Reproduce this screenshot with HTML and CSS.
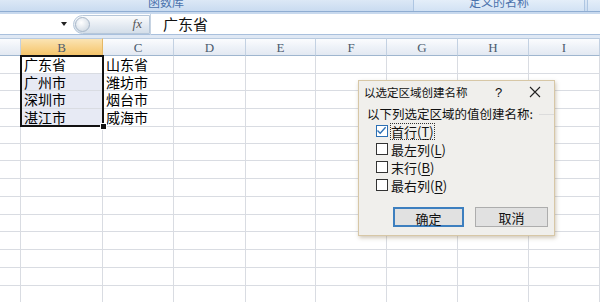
FILE: index.html
```html
<!DOCTYPE html>
<html>
<head lang="zh">
    <meta charset="UTF-8">
    <title>以选定区域创建名称</title>
    <link rel="stylesheet" href="styles.css">
</head>
<body>
<div class="ribbon">
    <div class="group first"><span>函数库</span></div>
    <div class="group names"><span>定义的名称</span></div>
    <div class="group last"></div>
</div>
<div class="formulaBar">
    <div class="nameBox"><span class="arrow"></span></div>
    <div class="pill"><span class="knob"></span><span class="fx">fx</span></div>
    <div class="formula">广东省</div>
</div>
<div class="band"></div>
<div class="sheetWrap">
    <div class="sheet" id="sheet">
        <div class="head"></div>
        <div class="head active">B</div>
        <div class="head">C</div>
        <div class="head">D</div>
        <div class="head">E</div>
        <div class="head">F</div>
        <div class="head">G</div>
        <div class="head">H</div>
        <div class="head">I</div>

        <div class="cell"></div><div class="cell">广东省</div><div class="cell">山东省</div>
        <div class="cell"></div><div class="cell"></div><div class="cell"></div><div class="cell"></div><div class="cell"></div><div class="cell"></div>

        <div class="cell"></div><div class="cell sel">广州市</div><div class="cell">潍坊市</div>
        <div class="cell"></div><div class="cell"></div><div class="cell"></div><div class="cell"></div><div class="cell"></div><div class="cell"></div>

        <div class="cell"></div><div class="cell sel">深圳市</div><div class="cell">烟台市</div>
        <div class="cell"></div><div class="cell"></div><div class="cell"></div><div class="cell"></div><div class="cell"></div><div class="cell"></div>

        <div class="cell"></div><div class="cell sel">湛江市</div><div class="cell">威海市</div>
        <div class="cell"></div><div class="cell"></div><div class="cell"></div><div class="cell"></div><div class="cell"></div><div class="cell"></div>
    </div>
    <div class="selection"><span class="handle"></span></div>

    <div class="dialog">
        <div class="titleBar">
            <span class="title">以选定区域创建名称</span>
            <span class="help">?</span>
            <svg class="close" width="12" height="12" viewBox="0 0 12 12"><path d="M1 1 L11 11 M11 1 L1 11" stroke="#222" stroke-width="1.1"/></svg>
        </div>
        <div class="legend">
            <span>以下列选定区域的值创建名称:</span>
            <span class="rule"></span>
        </div>
        <ul class="checks">
            <li><span class="box checked"><svg width="11" height="11" viewBox="0 0 11 11"><path d="M1.5 5.5 L4.2 8.3 L9.6 2.2" fill="none" stroke="#2b6fb4" stroke-width="1.3"/></svg></span><span class="focus">首行(<u>T</u>)</span></li>
            <li><span class="box"></span><span>最左列(<u>L</u>)</span></li>
            <li><span class="box"></span><span>末行(<u>B</u>)</span></li>
            <li><span class="box"></span><span>最右列(<u>R</u>)</span></li>
        </ul>
        <div class="buttons">
            <button class="btn primary">确定</button>
            <button class="btn">取消</button>
        </div>
    </div>
</div>
<script>
    // 补齐下面的空行
    var sheet = document.getElementById("sheet");
    for(var i = 0; i < 10 * 9; i++){
        var c = document.createElement("div");
        c.className = "cell";
        sheet.appendChild(c);
    }
</script>
</body>
</html>
```

FILE: styles.css
```css
*{
    padding: 0;
    margin: 0;
    box-sizing: border-box;
}
body{
    width: 600px;
    height: 303px;
    overflow: hidden;
    background: #fff;
    font-family: "Noto Sans CJK SC", "Liberation Sans", sans-serif;
}
ul{
    list-style: none;
}
.ribbon{
    display: flex;
    height: 11px;
    overflow: hidden;
    background: linear-gradient(#dce8f6, #c9dbf0);
}
.group{
    height: 11px;
    font-size: 12px;
    line-height: 12px;
    color: #4a72ac;
}
.group span{
    display: block;
    margin-top: -4px;
}
.group.first{
    width: 413px;
    padding-left: 148px;
}
.group.names{
    width: 172px;
    text-align: center;
    background: linear-gradient(#e4eef9, #d2e2f4);
    border-left: 1px solid #aec6e2;
    border-right: 1px solid #aec6e2;
}
.group.last{
    flex: 1;
    margin-left: 2px;
    border-left: 1px solid #aec6e2;
    background: linear-gradient(#e4eef9, #d2e2f4);
}
.formulaBar{
    display: flex;
    align-items: center;
    height: 24px;
    border-top: 1px solid #8fadd2;
    border-bottom: 1px solid #a9c0dd;
    box-shadow: inset 0 2px 0 #c8d9ee;
}
.nameBox{
    width: 73px;
    height: 100%;
    position: relative;
}
.arrow{
    position: absolute;
    left: 61px;
    top: 10px;
    border-left: 3px solid transparent;
    border-right: 3px solid transparent;
    border-top: 4px solid #222;
}
.pill{
    display: flex;
    align-items: center;
    justify-content: flex-end;
    width: 77px;
    height: 19px;
    margin-top: 2px;
    padding-right: 4px;
    border: 1px solid #b6c7da;
    border-radius: 10px 0 0 10px;
    background: linear-gradient(#fbfcfd, #e2e9f1 60%, #d4dee9);
    position: relative;
}
.knob{
    position: absolute;
    left: 1px;
    top: 1px;
    width: 15px;
    height: 15px;
    border-radius: 50%;
    border: 1px solid #a6b6c8;
    background: radial-gradient(circle at 40% 35%, #ffffff, #c7d2de);
}
.fx{
    font: italic 13px "Liberation Serif", serif;
    color: #555;
    padding-right: 3px;
}
.formula{
    flex: 1;
    height: 21px;
    margin-top: 2px;
    padding-left: 12px;
    border-left: 1px solid #c6d3e2;
    font-size: 15px;
    line-height: 20px;
    color: #111;
}
.band{
    height: 3px;
    background: #dfe8f4;
}
.sheetWrap{
    position: relative;
}
.sheet{
    display: grid;
    grid-template-columns: 21px 82px 71px 72px 70px 71px 71px 71px 71px;
    grid-template-rows: 18px 18px 17px 18px 18px 17px 17px 18px 18px 18px 17px 18px 18px 18px 18px;
    height: 264px;
    overflow: hidden;
}
.head{
    border-top: 1px solid #b9cbe0;
    border-right: 1px solid #c3d1e2;
    border-bottom: 1px solid #9fb6cf;
    background: linear-gradient(#fbfcfe, #eef2f8 50%, #e3e9f2);
    font: 13px/18px "Liberation Serif", serif;
    color: #4b5b6e;
    text-align: center;
}
.head.active{
    background: linear-gradient(#fbe4b4, #f8d48e 50%, #f4c56c);
    border-right-color: #e5b865;
    border-bottom-color: #d9a64f;
}
.cell{
    border-right: 1px solid #d9dce2;
    border-bottom: 1px solid #d9dce2;
    padding-left: 3px;
    font-size: 14px;
    line-height: 16px;
    color: #000;
    white-space: nowrap;
}
.cell.sel{
    background: #e7eaf4;
}
.selection{
    position: absolute;
    left: 20px;
    top: 17px;
    width: 84px;
    height: 72px;
    border: 2px solid #111;
}
.handle{
    position: absolute;
    right: -5px;
    bottom: -5px;
    width: 7px;
    height: 7px;
    background: #111;
    border: 1px solid #fff;
}
.dialog{
    position: absolute;
    left: 358px;
    top: 42px;
    width: 197px;
    height: 156px;
    background: #f0efec;
    border: 1px solid #d7c7a6;
    box-shadow: 1px 2px 4px rgba(120, 100, 60, 0.35);
    font-size: 12px;
    color: #111;
}
.titleBar{
    display: flex;
    align-items: center;
    height: 22px;
    padding-left: 5px;
}
.title{
    flex: 1;
    font-size: 11.5px;
}
.help{
    width: 34px;
    font: 13px "Liberation Sans", sans-serif;
}
.close{
    margin-right: 13px;
}
.legend{
    display: flex;
    align-items: center;
    padding: 2px 0 0 8px;
    font-size: 12.5px;
    line-height: 17px;
}
.rule{
    flex: 1;
    margin: 2px 0 0 6px;
    border-top: 1px solid #dcdcdc;
}
.checks{
    padding: 0 0 0 17px;
}
.checks li{
    display: flex;
    align-items: center;
    height: 18px;
    font-size: 13px;
}
.box{
    display: inline-flex;
    width: 12px;
    height: 12px;
    margin-right: 3px;
    border: 1px solid #333;
    background: #fff;
}
.box.checked{
    border-color: #2b6fb4;
}
.box svg{
    margin: -1px 0 0 -1px;
}
.focus{
    outline: 1px dotted #333;
    line-height: 15px;
}
u{
    text-decoration: underline;
    text-underline-offset: 2px;
}
.buttons{
    display: flex;
    gap: 11px;
    padding: 13px 0 0 34px;
}
.btn{
    width: 73px;
    height: 20px;
    font: 13px "Noto Sans CJK SC", sans-serif;
    color: #111;
    background: #e1e1e1;
    border: 1px solid #adadad;
}
.btn.primary{
    width: 71px;
    border: 2px solid #3d7fbf;
}
```
